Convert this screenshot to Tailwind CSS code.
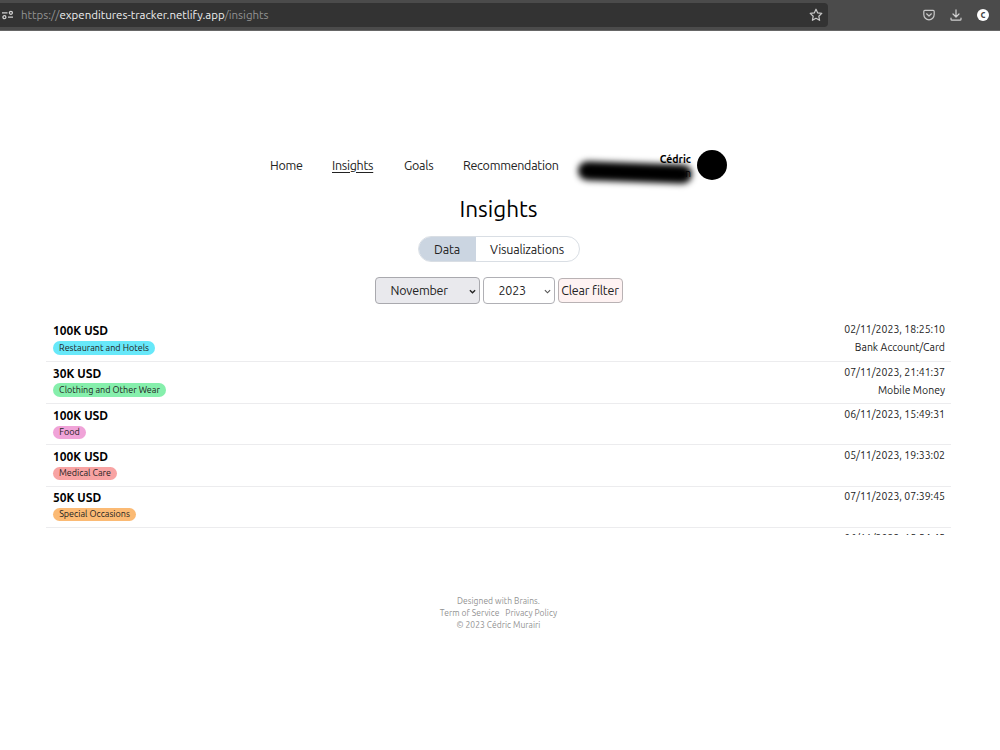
<!DOCTYPE html>
<html lang="en">

<head>
  <meta charset="UTF-8" />
  <meta name="viewport" content="width=device-width, initial-scale=1.0" />
  <script src="https://cdn.jsdelivr.net/npm/@tailwindcss/browser@4"></script>
  <title>Insights | Expenditures Tracker</title>
</head>

<body class="bg-white text-[#222] h-[750px] overflow-hidden flex flex-col font-['Ubuntu','Noto_Sans',sans-serif]">
  <!-- Browser bar -->
  <div class="h-[31px] shrink-0 bg-[#4b4b4b] border-b border-[#666] flex items-center">
    <div class="w-[828px] h-6 bg-[#333] rounded-r flex items-center pl-[2px] pr-[5px]">
      <svg class="w-3 h-3" viewBox="0 0 12 12" fill="none" stroke="#d0d0d0" stroke-width="1.3">
        <path d="M0 3.8h5.5M6 8.2h5" />
        <circle cx="8.9" cy="3.8" r="1.5" />
        <circle cx="2.4" cy="8.2" r="1.5" />
      </svg>
      <p class="ml-[7px] text-[11.5px] tracking-[-0.01px] text-[#929292] whitespace-nowrap">https://<span class="text-[#eee]">expenditures-tracker.netlify.app</span>/insights</p>
      <svg class="w-[14px] h-[14px] ml-auto" viewBox="0 0 14 14" fill="none" stroke="#c9c9c9" stroke-width="1.2" stroke-linejoin="round">
        <path d="M7 1.2l1.7 3.7 4.1.5-3 2.8.8 4.1L7 10.3l-3.6 2 .8-4.1-3-2.8 4.1-.5z" />
      </svg>
    </div>
    <div class="ml-auto mr-[11px] flex items-center gap-[15px]">
      <svg class="w-3 h-3" viewBox="0 0 12 12" fill="none" stroke="#c9c9c9" stroke-width="1.2" stroke-linecap="round" stroke-linejoin="round">
        <path d="M1.8 1.4h8.4a1 1 0 0 1 1 1v3.2a5.2 5.2 0 0 1-10.4 0V2.4a1 1 0 0 1 1-1zM3.6 4.8L6 7l2.4-2.2" />
      </svg>
      <svg class="w-3 h-3" viewBox="0 0 12 12" fill="none" stroke="#d0d0d0" stroke-width="1.2" stroke-linecap="round" stroke-linejoin="round">
        <path d="M6 .8v7M3 5l3 3 3-3M1 9.2v1a1 1 0 0 0 1 1h8a1 1 0 0 0 1-1v-1" />
      </svg>
      <span class="w-3 h-3 rounded-full bg-white text-[#444] text-[10px] font-bold leading-[11px] text-center">c</span>
    </div>
  </div>

  <!-- Navigation -->
  <header class="mt-[119px] h-[30px] w-[457px] ml-[270px] flex items-center text-[12.5px] tracking-[-0.28px] shrink-0">
    <nav class="flex items-center gap-[30px] whitespace-nowrap">
      <a href="#" class="w-8">Home</a>
      <a href="#" class="w-[42px] underline underline-offset-2">Insights</a>
      <a href="#" class="w-[29px]">Goals</a>
      <a href="#" class="w-[95px]">Recommendation</a>
    </nav>
    <div class="relative ml-auto flex items-center gap-[6px]">
      <div class="text-[10.5px] font-bold text-right leading-[14px] tracking-normal text-black pt-px">
        <p>Cédric</p>
        <p class="font-normal">n</p>
      </div>
      <div class="absolute -left-[82px] top-[13px] w-[114px] h-[19px] rounded-full bg-black blur-[3px] rotate-2"></div>
      <div class="relative w-[30px] h-[30px] rounded-full bg-black"></div>
    </div>
  </header>

  <main class="flex flex-col items-center pr-[3px] shrink-0">
    <h1 class="mt-[13px] text-[22.5px] leading-8 text-black">Insights</h1>

    <div class="mt-[11px] h-[26px] w-[162px] flex rounded-full border border-[#d9dee4] overflow-hidden text-[12.5px] tracking-[-0.2px] whitespace-nowrap">
      <button class="w-[57px] shrink-0 bg-[#cbd5e1]">Data</button>
      <button class="grow">Visualizations</button>
    </div>

    <div class="mt-[15px] h-[27px] flex items-center gap-[3px] text-[12.5px] tracking-[-0.2px] whitespace-nowrap">
      <button class="w-[105px] h-[27px] flex items-center justify-between pl-[15px] pr-[3px] rounded border border-[#a9a9ae] bg-[#e9e9ed]">
        <span>November</span>
        <svg class="w-[7px] h-[7px] mt-[2px]" viewBox="0 0 8 8" fill="none" stroke="#222" stroke-width="1.5"><path d="M1 2.5l3 3 3-3" /></svg>
      </button>
      <button class="w-[72px] h-[27px] flex items-center justify-between pl-[15px] pr-[3px] rounded border border-[#b0b0b5] bg-white">
        <span>2023</span>
        <svg class="w-[7px] h-[7px] mt-[2px]" viewBox="0 0 8 8" fill="none" stroke="#555" stroke-width="1.3"><path d="M1 2.5l3 3 3-3" /></svg>
      </button>
      <button class="w-[65px] h-[25px] rounded border border-[#b9b2b4] bg-[#fef2f2]">Clear filter</button>
    </div>
  </main>

  <!-- Expenditures -->
  <ul class="mt-[15px] ml-[46px] w-[905px] h-[216px] shrink-0 overflow-hidden text-[10.5px] whitespace-nowrap">
    <li class="h-[43px] pl-[7px] pr-[6px] pt-[4px] flex justify-between border-b border-[#ececee]">
      <div>
        <h2 class="text-[12px] leading-[16px] font-bold text-black">100K USD</h2>
        <span class="mt-[2px] h-[14px] pt-px w-[102px] flex items-center justify-center rounded-full bg-[#67e8f9] text-[9px]">Restaurant and Hotels</span>
      </div>
      <div class="text-right leading-[18px] -mt-[3px]">
        <p>02/11/2023, 18:25:10</p>
        <p>Bank Account/Card</p>
      </div>
    </li>
    <li class="h-[42px] pl-[7px] pr-[6px] pt-[4px] flex justify-between border-b border-[#ececee]">
      <div>
        <h2 class="text-[12px] leading-[16px] font-bold text-black">30K USD</h2>
        <span class="mt-px h-[14px] pt-[2px] w-[113px] flex items-center justify-center rounded-full bg-[#86efac] text-[9px]">Clothing and Other Wear</span>
      </div>
      <div class="text-right leading-[18px] -mt-[3px]">
        <p>07/11/2023, 21:41:37</p>
        <p>Mobile Money</p>
      </div>
    </li>
    <li class="h-[41px] pl-[7px] pr-[6px] pt-[4px] flex justify-between border-b border-[#ececee]">
      <div>
        <h2 class="text-[12px] leading-[16px] font-bold text-black">100K USD</h2>
        <span class="mt-[2px] h-[13px] pt-px w-[33px] flex items-center justify-center rounded-full bg-[#f0a3d8] text-[9px]">Food</span>
      </div>
      <p class="leading-[18px] -mt-[3px]">06/11/2023, 15:49:31</p>
    </li>
    <li class="h-[42px] pl-[7px] pr-[6px] pt-[4px] flex justify-between border-b border-[#ececee]">
      <div>
        <h2 class="text-[12px] leading-[16px] font-bold text-black">100K USD</h2>
        <span class="mt-[2px] h-[13px] pt-px w-[64px] flex items-center justify-center rounded-full bg-[#f8a3a3] text-[9px]">Medical Care</span>
      </div>
      <p class="leading-[18px] -mt-[3px]">05/11/2023, 19:33:02</p>
    </li>
    <li class="h-[41px] pl-[7px] pr-[6px] pt-[3px] flex justify-between border-b border-[#ececee]">
      <div>
        <h2 class="text-[12px] leading-[16px] font-bold text-black">50K USD</h2>
        <span class="mt-[2px] h-[13px] pt-px w-[83px] flex items-center justify-center rounded-full bg-[#fbba74] text-[9px]">Special Occasions</span>
      </div>
      <p class="leading-[18px] -mt-[3px]">07/11/2023, 07:39:45</p>
    </li>
    <li class="h-[41px] pl-[7px] pr-[6px] pt-[4px] flex justify-end">
      <p class="leading-[18px] -mt-[3px]">06/11/2023, 15:54:45</p>
    </li>
  </ul>

  <footer class="mt-[60px] pr-[3px] text-center text-[8.5px] tracking-[0.03px] leading-[12px] text-[#929292]">
    <p>Designed with Brains.</p>
    <p class="flex justify-center gap-[6px]"><a href="#">Term of Service</a><a href="#">Privacy Policy</a></p>
    <p>© 2023 Cédric Murairi</p>
  </footer>
</body>

</html>
